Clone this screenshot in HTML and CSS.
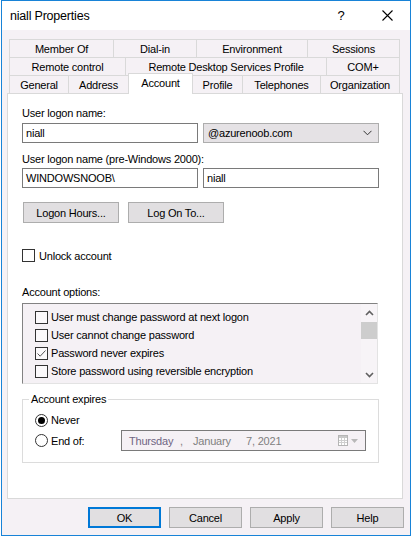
FILE: index.html
```html
<!DOCTYPE html>
<html>
<head>
<meta charset="utf-8">
<link rel="stylesheet" href="styles.css">
</head>
<body>
<div class="window">
  <div class="titlebar">
    <span class="title">niall Properties</span>
    <span class="caption-btn help">?</span>
    <span class="caption-btn"><svg width="11" height="11" viewBox="0 0 11 11"><path d="M0.5 0.5L10.5 10.5M10.5 0.5L0.5 10.5" stroke="#000" stroke-width="1.1" fill="none"/></svg></span>
  </div>
  <div class="client">
    <div class="tabs">
      <div class="tab-row">
        <div class="tab w-member">Member Of</div>
        <div class="tab w-dial">Dial-in</div>
        <div class="tab w-env">Environment</div>
        <div class="tab w-sess last">Sessions</div>
      </div>
      <div class="tab-row">
        <div class="tab w-remote">Remote control</div>
        <div class="tab w-rds">Remote Desktop Services Profile</div>
        <div class="tab w-com last">COM+</div>
      </div>
      <div class="tab-row">
        <div class="tab w-general">General</div>
        <div class="tab w-address">Address</div>
        <div class="tab w-account active">Account</div>
        <div class="tab w-profile">Profile</div>
        <div class="tab w-phones">Telephones</div>
        <div class="tab w-org last">Organization</div>
      </div>
    </div>
    <div class="panel">
      <div class="label">User logon name:</div>
      <div class="field-row first">
        <div class="textbox">niall</div>
        <div class="textbox combo"><span>@azurenoob.com</span><svg width="9" height="6" viewBox="0 0 9 6"><path d="M0.5 0.8L4.5 4.8L8.5 0.8" stroke="#333" stroke-width="1" fill="none"/></svg></div>
      </div>
      <div class="label second">User logon name (pre-Windows 2000):</div>
      <div class="field-row second">
        <div class="textbox">WINDOWSNOOB\</div>
        <div class="textbox">niall</div>
      </div>
      <div class="button-row">
        <div class="btn wide">Logon Hours...</div>
        <div class="btn wide">Log On To...</div>
      </div>
      <div class="check-row unlock">
        <span class="checkbox"></span>
        <span>Unlock account</span>
      </div>
      <div class="label options">Account options:</div>
      <div class="listbox">
        <div class="list-items">
          <div class="list-item"><span class="checkbox"></span><span>User must change password at next logon</span></div>
          <div class="list-item"><span class="checkbox"></span><span>User cannot change password</span></div>
          <div class="list-item"><span class="checkbox"><svg width="11" height="11" viewBox="0 0 11 11"><path d="M1.5 5.5L4.2 8.2L9.5 2.5" stroke="#555" stroke-width="1" fill="none"/></svg></span><span>Password never expires</span></div>
          <div class="list-item"><span class="checkbox"></span><span>Store password using reversible encryption</span></div>
        </div>
        <div class="scrollbar">
          <div class="arrow"><svg width="9" height="6" viewBox="0 0 9 6"><path d="M1 5L4.5 1.5L8 5" stroke="#606060" stroke-width="1.6" fill="none"/></svg></div>
          <div class="thumb"></div>
          <div class="track"></div>
          <div class="arrow"><svg width="9" height="6" viewBox="0 0 9 6"><path d="M1 1L4.5 4.5L8 1" stroke="#606060" stroke-width="1.6" fill="none"/></svg></div>
        </div>
      </div>
      <fieldset class="group">
        <legend>Account expires</legend>
        <div class="group-body">
          <div class="radio-row never">
            <span class="radio checked"><span class="dot"></span></span>
            <span>Never</span>
          </div>
          <div class="radio-row endof">
            <span class="radio"></span>
            <span class="radio-label">End of:</span>
            <div class="datepicker">
              <span class="d-day">Thursday</span>
              <span class="d-comma">,</span>
              <span class="d-month">January</span>
              <span class="d-year">7, 2021</span>
              <span class="d-icons">
                <svg width="10" height="11" viewBox="0 0 10 11"><rect x="0.5" y="0.5" width="9" height="10" fill="#fff" stroke="#b5b5b5"/><rect x="1" y="1" width="8" height="2" fill="#c8c8c8"/><path d="M1 5.5H9M1 7.5H9M3.5 3V10M6.5 3V10" stroke="#cfcfcf" stroke-width="1"/></svg>
                <svg width="7" height="4" viewBox="0 0 7 4"><path d="M0 0H7L3.5 4Z" fill="#b8b8b8"/></svg>
              </span>
            </div>
          </div>
        </div>
      </fieldset>
    </div>
    <div class="dialog-buttons">
      <div class="btn default">OK</div>
      <div class="btn">Cancel</div>
      <div class="btn">Apply</div>
      <div class="btn">Help</div>
    </div>
  </div>
</div>
</body>
</html>
```
FILE: styles.css
```css
body {
  margin: 0;
  background: #fff;
  font-family: "Liberation Sans", Arial, sans-serif;
  font-size: 11px;
  letter-spacing: -0.2px;
  color: #000;
}
.window {
  margin-left: 1px;
  width: 410px;
  height: 536px;
  box-sizing: border-box;
  border: 1px solid #1883d7;
  display: flex;
  flex-direction: column;
  background: #f5f1f5;
}
.titlebar {
  height: 29px;
  flex-shrink: 0;
  background: #fff;
  display: flex;
  align-items: center;
}
.title {
  flex: 1;
  padding-left: 8px;
  font-size: 12.5px;
  letter-spacing: -0.2px;
}
.caption-btn {
  width: 46px;
  height: 29px;
  display: flex;
  align-items: center;
  justify-content: center;
}
.help {
  font-size: 13px;
}
.client {
  flex: 1;
  padding-top: 9px;
}
.tabs {
  margin-left: 7px;
  width: 391px;
}
.tab-row {
  display: flex;
  height: 18px;
}
.tab {
  box-sizing: border-box;
  height: 18px;
  border-top: 1px solid #d9d9d9;
  border-left: 1px solid #d9d9d9;
  text-align: center;
  line-height: 19px;
  white-space: nowrap;
}
.tab.last { border-right: 1px solid #d9d9d9; }
.tab.active {
  height: 21px;
  margin-top: -2px;
  margin-right: -1px;
  background: #fff;
  border-right: 1px solid #d9d9d9;
  line-height: 18px;
  position: relative;
  z-index: 1;
}
.w-member { width: 104px; }
.w-dial { width: 83px; }
.w-env { width: 111px; }
.w-sess { width: 93px; }
.w-remote { width: 116px; }
.w-rds { width: 201px; }
.w-com { width: 74px; }
.w-general { width: 59px; }
.w-address { width: 60px; }
.w-account { width: 65px; }
.w-profile { width: 50px; }
.w-phones { width: 78px; }
.w-org { width: 80px; }

.panel {
  margin-left: 5px;
  width: 396px;
  height: 406px;
  box-sizing: border-box;
  border: 1px solid #d9d9d9;
  background: #fff;
  padding: 12px 0 0 14px;
}
.label {
  height: 14px;
  line-height: 14px;
}
.label.second { margin-top: 9px; }
.label.options { margin-top: 23px; }
.field-row {
  display: flex;
  gap: 5px;
  margin-top: 3px;
}
.field-row.second { margin-top: 2px; }
.textbox {
  box-sizing: border-box;
  width: 176px;
  height: 20px;
  border: 1px solid #7a7a7a;
  background: #fff;
  padding-left: 3px;
  line-height: 18px;
  white-space: nowrap;
}
.combo {
  background: #e5e2e5;
  border-color: #adadad;
  display: flex;
  align-items: center;
  justify-content: space-between;
  padding: 0 6px 0 4px;
}
.button-row {
  display: flex;
  gap: 9px;
  margin-top: 14px;
  margin-left: 1px;
}
.btn {
  box-sizing: border-box;
  width: 73px;
  height: 21px;
  border: 1px solid #adadad;
  background: #e1dfe1;
  display: flex;
  align-items: center;
  justify-content: center;
  white-space: nowrap;
}
.btn.wide { width: 96px; }
.btn.default { border: 2px solid #0078d7; }
.check-row {
  display: flex;
  align-items: center;
  gap: 4px;
  height: 13px;
}
.check-row.unlock { margin-top: 26px; }
.checkbox {
  box-sizing: border-box;
  width: 13px;
  height: 13px;
  border: 1px solid #333;
  background: #fff;
  flex-shrink: 0;
  display: flex;
}
.listbox {
  box-sizing: border-box;
  margin-top: 4px;
  width: 356px;
  height: 81px;
  border: 1px solid #e3e3e3;
  border-top-color: #828282;
  border-left-color: #828282;
  background: #f5f1f5;
  display: flex;
  overflow: hidden;
}
.list-items {
  flex: 1;
  padding: 4px 0 0 12px;
}
.list-item {
  height: 18px;
  display: flex;
  align-items: center;
  gap: 3px;
  white-space: nowrap;
}
.list-item .checkbox { background: #fbf9fb; }
.scrollbar {
  width: 16px;
  display: flex;
  flex-direction: column;
  background: #f7f4f7;
}
.arrow {
  height: 17px;
  display: flex;
  align-items: center;
  justify-content: center;
}
.thumb {
  height: 17px;
  background: #cdcdcd;
  margin-top: 1px;
}
.track { flex: 1; }

.group {
  margin: 8px 0 0 0;
  padding: 0;
  width: 357px;
  box-sizing: border-box;
  border: 1px solid #dcdcdc;
  min-width: 0;
}
.group legend {
  margin-left: 6px;
  padding: 0 2px;
  line-height: 14px;
}
.group-body {
  padding: 0 0 11px 12px;
}
.radio-row {
  display: flex;
  align-items: center;
  gap: 3px;
}
.radio-row.never {
  height: 14px;
  margin-top: 7px;
}
.radio-row.endof {
  height: 21px;
  margin-top: 3px;
}
.radio {
  box-sizing: border-box;
  width: 13px;
  height: 13px;
  border: 1px solid #333;
  border-radius: 50%;
  background: #fff;
  display: flex;
  align-items: center;
  justify-content: center;
  flex-shrink: 0;
}
.dot {
  width: 7px;
  height: 7px;
  border-radius: 50%;
  background: #000;
}
.radio-label { width: 67px; }
.datepicker {
  box-sizing: border-box;
  width: 245px;
  height: 21px;
  border: 1px solid #7a7a7a;
  background: #f5f1f5;
  display: flex;
  align-items: center;
  padding: 0 7px 0 7px;
  color: #808080;
  white-space: nowrap;
}
.d-day { width: 51px; color: #6f6583; }
.d-comma { width: 13px; }
.d-month { width: 53px; }
.d-icons {
  margin-left: auto;
  display: flex;
  align-items: center;
  gap: 3px;
}
.dialog-buttons {
  display: flex;
  justify-content: flex-end;
  gap: 8px;
  padding-right: 6px;
  margin-top: 8px;
}
```
